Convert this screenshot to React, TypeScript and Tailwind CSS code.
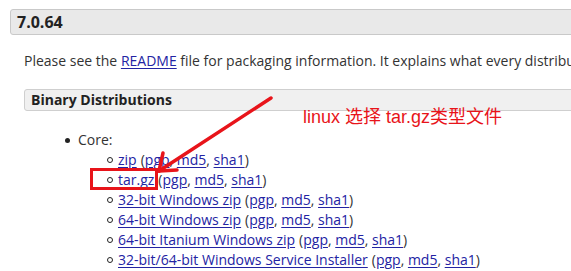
const links = [
  "zip",
  "tar.gz",
  "32-bit Windows zip",
  "64-bit Windows zip",
  "64-bit Itanium Windows zip",
  "32-bit/64-bit Windows Service Installer",
];

function Item({ label }: { label: string }) {
  return (
    <li className="flex h-[20px] items-center">
      <span className="ml-[107px] mr-[5px] h-[6px] w-[6px] shrink-0 rounded-full border-[1.5px] border-[#222]" />
      <a className="text-[#2323a3] underline underline-offset-[2px]" href="#">
        {label}
      </a>
      <span className="ml-[4px]">(</span>
      <a className="text-[#2323a3] underline underline-offset-[2px]" href="#">pgp</a>
      <span>,&nbsp;</span>
      <a className="text-[#2323a3] underline underline-offset-[2px]" href="#">md5</a>
      <span>,&nbsp;</span>
      <a className="text-[#2323a3] underline underline-offset-[2px]" href="#">sha1</a>
      <span>)</span>
    </li>
  );
}

export default function App() {
  return (
    <div className="relative h-[271px] w-[571px] overflow-hidden bg-white font-['Open_Sans',sans-serif] text-[14px] leading-[20px] text-[#333]">
      <div className="ml-[10px] mt-[9px] h-[26px] w-[620px] rounded-[3px] border border-[#c9c9c9] bg-[#e9e9e9] pl-[6px] text-[16px] font-bold leading-[24px] text-[#222]">
        7.0.64
      </div>
      <p className="ml-[24px] mt-[16px] whitespace-nowrap">
        Please see the{" "}
        <a className="text-[#2323a3] underline underline-offset-[2px]" href="#">README</a>{" "}
        file for packaging information. It explains what every distribution contains.
      </p>
      <div className="ml-[24px] mt-[18px] h-[22px] w-[600px] rounded-[3px] border border-[#cfcfcf] bg-[#f0f0f0] pl-[6px] font-bold text-[#222]">
        Binary Distributions
      </div>
      <ul className="mt-[19px]">
        <li className="flex h-[20px] items-center">
          <span className="ml-[65px] mr-[8px] h-[5px] w-[5px] rounded-full bg-[#222]" />
          Core:
        </li>
        <li>
          <ul>
            {links.map((l) => (
              <Item key={l} label={l} />
            ))}
          </ul>
        </li>
      </ul>

      {/* annotations drawn over the page */}
      <div className="absolute left-[90px] top-[168px] h-[22px] w-[68px] border-[3px] border-[#e8141a]" />
      <svg className="absolute left-0 top-0" width="571" height="271">
        <g stroke="#e8141a" strokeWidth="3.5" strokeLinecap="round" fill="none">
          <line x1="271" y1="98" x2="159" y2="171" />
          <line x1="159" y1="171" x2="163" y2="153" />
          <line x1="159" y1="171" x2="177" y2="170" />
        </g>
      </svg>
      <div className="absolute left-[303px] top-[105px] whitespace-nowrap font-['Liberation_Sans','Noto_Sans_CJK_SC',sans-serif] text-[18px] leading-[24px] text-[#e8141a]">
        linux 选择 tar.gz类型文件
      </div>
    </div>
  );
}
